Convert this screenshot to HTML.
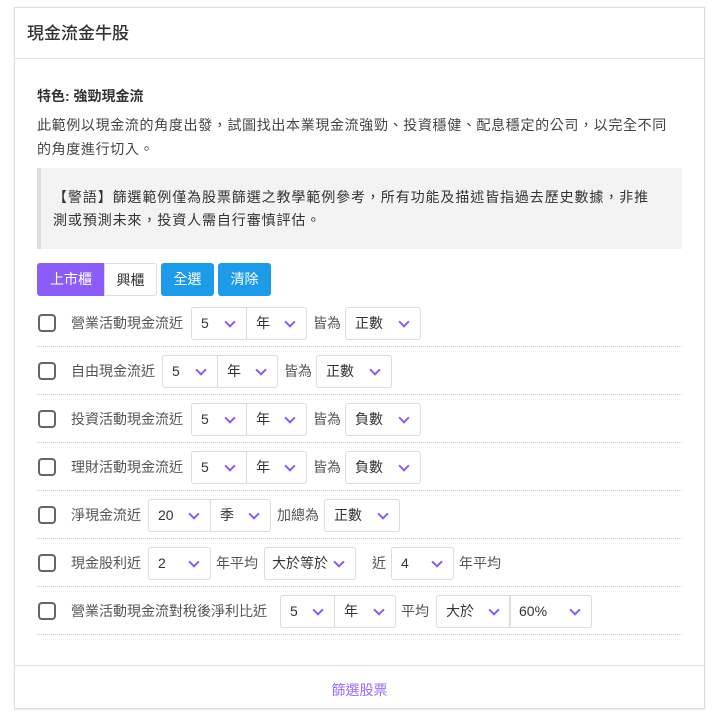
<!DOCTYPE html><html><head><meta charset="utf-8"><style>
*{box-sizing:border-box;margin:0;padding:0}
body{width:720px;height:717px;background:#fff;font-family:"Liberation Sans","Noto Sans CJK TC",sans-serif;color:#333;position:relative}
.card{position:absolute;left:14px;top:7px;width:691px;height:702px;border:1px solid #ddd;box-shadow:0 1px 2px rgba(0,0,0,.08)}
.hd{height:51px;border-bottom:1px solid #e3e3e3;padding-left:12px;font-size:17px;font-weight:500;line-height:51px;color:#333}
.a{position:absolute;white-space:nowrap}
.t{font-size:14px;color:#444}
.warn{position:absolute;left:22px;top:160px;width:645px;height:81px;background:#f3f3f3;border-left:4px solid #ddd;padding:18px 0 0 12px;font-size:14px;line-height:23px;color:#333;letter-spacing:0.9px;white-space:nowrap}
.btn{position:absolute;top:255px;height:33px;line-height:33px;text-align:center;font-size:14px;color:#fff;border-radius:3px}
.row{position:absolute;left:22px;width:645px;height:48px;border-bottom:1px dotted #ccc}
.cb{position:absolute;left:1px;top:15px;width:18px;height:18px;border:2px solid #666;border-radius:4px}
.lb{position:absolute;top:14px;font-size:14px;color:#555;white-space:nowrap}
.sel{position:absolute;top:8px;height:33px;border:1px solid #ddd;border-radius:3px;font-size:14px;color:#333;line-height:31px;padding-left:9px;white-space:nowrap}
.sel+.sel{border-radius:0 3px 3px 0}
.sel:after{content:"";position:absolute;right:12px;top:10px;width:6px;height:6px;border-right:2px solid #8b5cf6;border-bottom:2px solid #8b5cf6;transform:rotate(45deg)}
.ft{position:absolute;left:0;right:0;top:657px;border-top:1px solid #e3e3e3;text-align:center;font-size:14px;color:#9b6cf5;padding-top:14px}
</style></head><body><div class="card">
<div class="hd">現金流金牛股</div>
<div class="a t" style="left:22px;top:78px;font-weight:bold;color:#333">特色: 強勁現金流</div>
<div class="a t" style="left:22px;top:105px;line-height:24px;letter-spacing:0.65px">此範例以現金流的角度出發，試圖找出本業現金流強勁、投資穩健、配息穩定的公司，以完全不同<br>的角度進行切入。</div>
<div class="warn">【警語】篩選範例僅為股票篩選之教學範例參考，所有功能及描述皆指過去歷史數據，非推<br>測或預測未來，投資人需自行審慎評估。</div>
<div class="btn" style="left:22px;width:68px;background:#8b5cf6;border-radius:3px 0 0 3px">上市櫃</div>
<div class="btn" style="left:89px;width:53px;background:#fff;color:#333;border:1px solid #ddd;border-radius:0 3px 3px 0">興櫃</div>
<div class="btn" style="left:146px;width:53px;background:#1e9be8">全選</div>
<div class="btn" style="left:203px;width:53px;background:#1e9be8">清除</div>

<div class="row" style="top:291px"><div class="cb"></div><div class="lb" style="left:34px">營業活動現金流近</div>
<div class="sel" style="left:154px;width:56px">5</div><div class="sel" style="left:209px;width:61px">年</div><div class="lb" style="left:276px">皆為</div><div class="sel" style="left:308px;width:76px">正數</div></div>
<div class="row" style="top:339px"><div class="cb"></div><div class="lb" style="left:34px">自由現金流近</div>
<div class="sel" style="left:125px;width:56px">5</div><div class="sel" style="left:180px;width:61px">年</div><div class="lb" style="left:247px">皆為</div><div class="sel" style="left:279px;width:76px">正數</div></div>
<div class="row" style="top:387px"><div class="cb"></div><div class="lb" style="left:34px">投資活動現金流近</div>
<div class="sel" style="left:154px;width:56px">5</div><div class="sel" style="left:209px;width:61px">年</div><div class="lb" style="left:276px">皆為</div><div class="sel" style="left:308px;width:76px">負數</div></div>
<div class="row" style="top:435px"><div class="cb"></div><div class="lb" style="left:34px">理財活動現金流近</div>
<div class="sel" style="left:154px;width:56px">5</div><div class="sel" style="left:209px;width:61px">年</div><div class="lb" style="left:276px">皆為</div><div class="sel" style="left:308px;width:76px">負數</div></div>
<div class="row" style="top:483px"><div class="cb"></div><div class="lb" style="left:34px">淨現金流近</div>
<div class="sel" style="left:111px;width:63px">20</div><div class="sel" style="left:173px;width:61px">季</div><div class="lb" style="left:240px">加總為</div><div class="sel" style="left:287px;width:76px">正數</div></div>
<div class="row" style="top:531px"><div class="cb"></div><div class="lb" style="left:34px">現金股利近</div>
<div class="sel" style="left:111px;width:63px">2</div><div class="lb" style="left:179px">年平均</div><div class="sel" style="left:227px;width:92px;padding-left:7px">大於等於</div><div class="lb" style="left:335px">近</div><div class="sel" style="left:354px;width:63px">4</div><div class="lb" style="left:422px">年平均</div></div>
<div class="row" style="top:579px"><div class="cb"></div><div class="lb" style="left:34px">營業活動現金流對稅後淨利比近</div>
<div class="sel" style="left:243px;width:55px">5</div><div class="sel" style="left:297px;width:62px">年</div><div class="lb" style="left:364px">平均</div><div class="sel" style="left:399px;width:75px">大於</div><div class="sel" style="left:472px;width:83px">60%</div></div>
<div class="ft">篩選股票</div>
</div></body></html>
